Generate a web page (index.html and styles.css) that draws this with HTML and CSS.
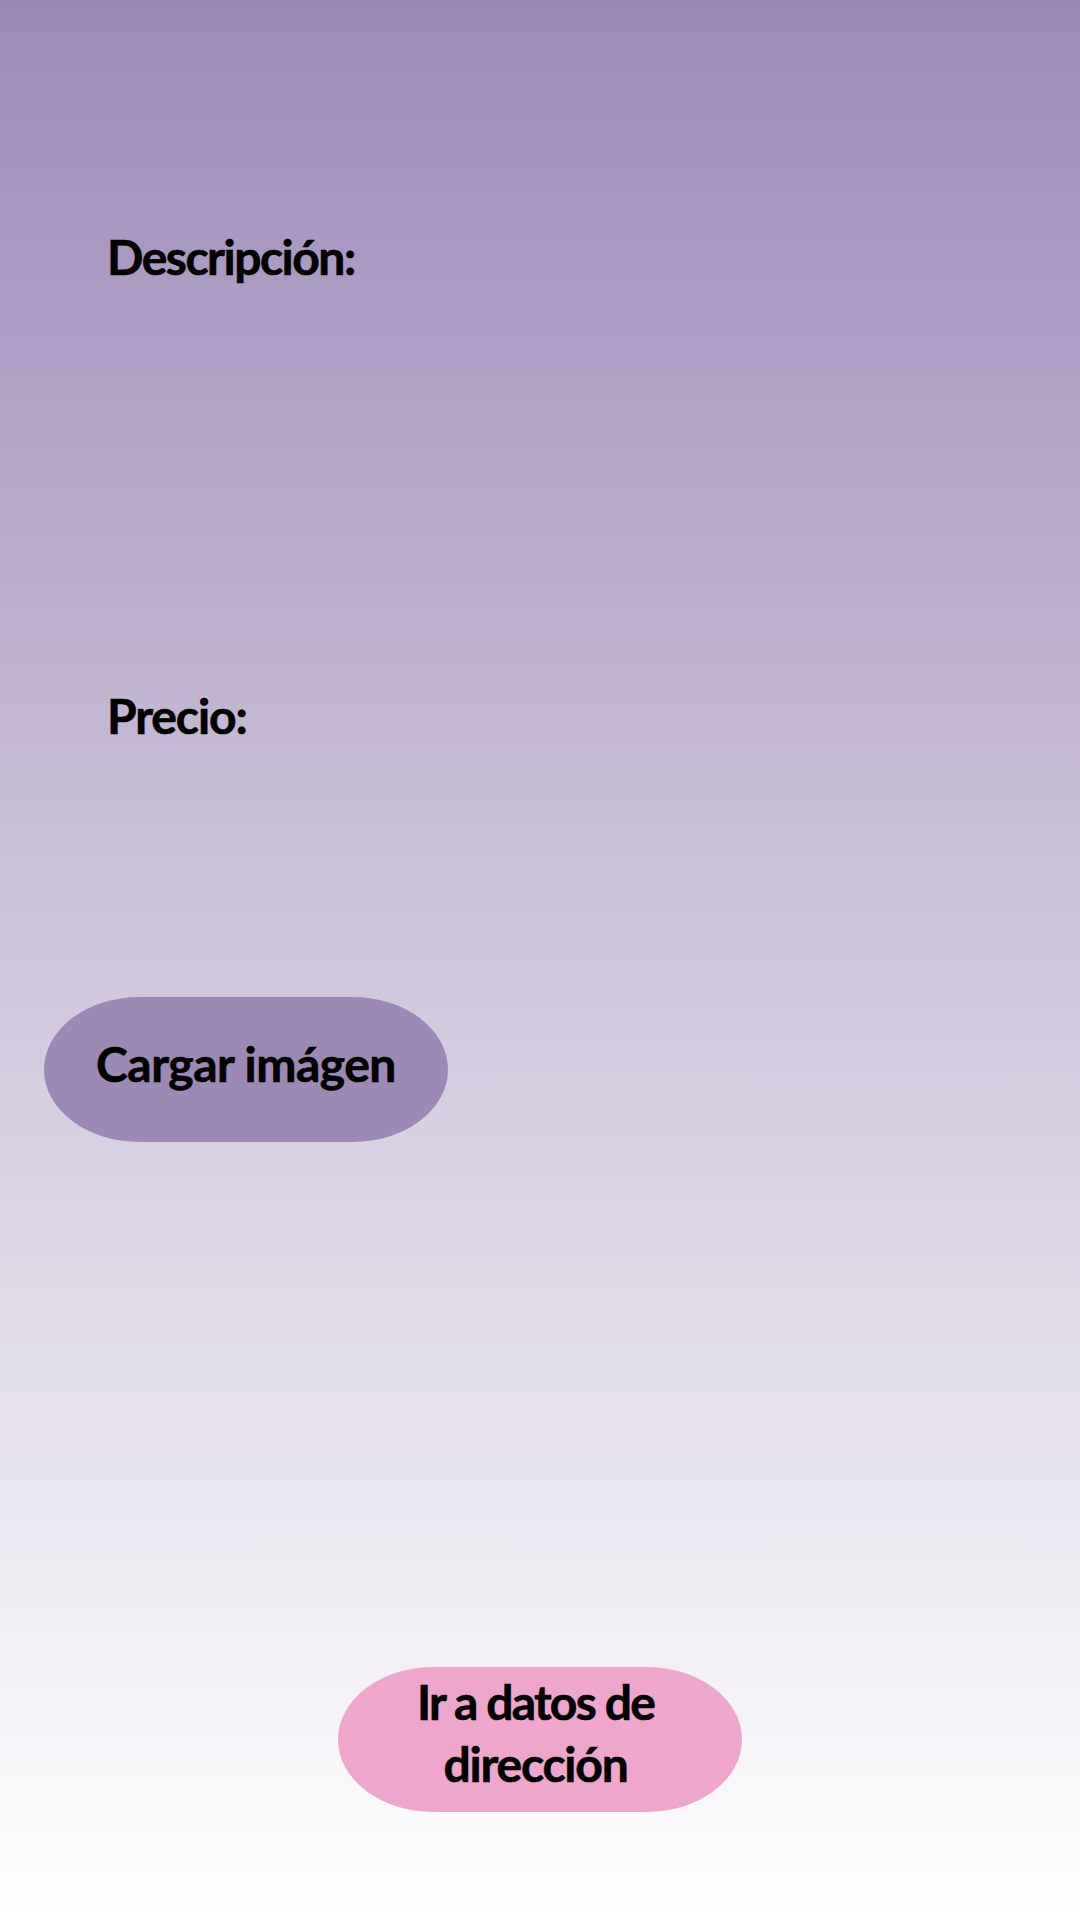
FILE: index.html
```html
<!DOCTYPE html>
<html lang="es">
<head>
<meta charset="utf-8">
<title>Publicar producto</title>
<link rel="stylesheet" href="styles.css">
</head>
<body>
<main class="screen">
  <p class="label label-description">Descripción:</p>
  <p class="label label-price">Precio:</p>
  <button class="pill upload">Cargar imágen</button>
  <button class="pill next"><span class="next-first">Ir a datos de</span><span class="next-second">dirección</span></button>
</main>
</body>
</html>
```

FILE: styles.css
```css
* { box-sizing: border-box; }
body { margin: 0; }
.screen {
  display: flex;
  flex-direction: column;
  align-items: flex-start;
  width: 1080px;
  height: 1920px;
  padding: 226px 44px 108px;
  background: linear-gradient(#9d89b6 0%, #b6a7cb 25%, #c6bbd5 41%, #e4dfec 72%, #f1eef4 85%, #fff 100%);
  font-family: Lato, sans-serif;
  font-size: 48px;
  font-weight: 700;
  line-height: 62px;
  color: #000;
  -webkit-text-stroke: 0.6px #000;
}
.label { margin: 0 0 0 63px; white-space: nowrap; }
.label-description { letter-spacing: -1.5px; }
.label-price { margin-top: 397px; letter-spacing: -1.1px; }
.pill {
  display: flex;
  flex-direction: column;
  align-items: center;
  justify-content: center;
  width: 404px;
  height: 145.5px;
  padding: 0;
  border: 0;
  border-radius: 96px / 73px;
  font: inherit;
  color: inherit;
  white-space: nowrap;
}
.upload { margin-top: 249.5px; padding-bottom: 11px; background: #9d89b6; letter-spacing: -0.5px; }
.next { align-self: center; margin-top: auto; padding: 0 9px 13px 0; background: #eea6cc; }
.next-first { letter-spacing: -1.8px; }
.next-second { letter-spacing: -1.2px; }
```
